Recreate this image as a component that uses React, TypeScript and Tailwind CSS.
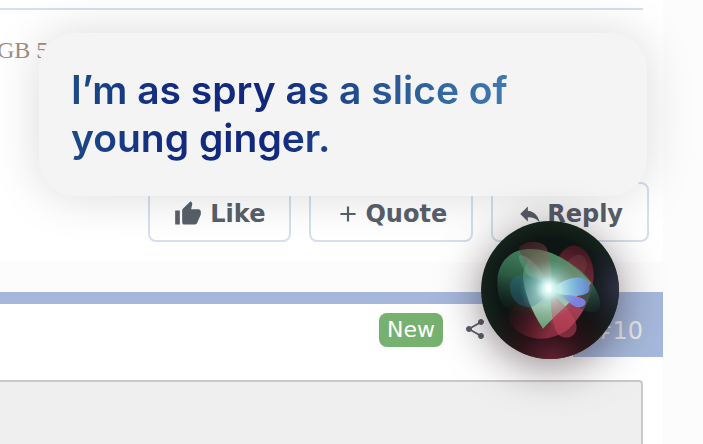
import React from 'react';
import { MdAdd, MdReply, MdShare, MdThumbUp } from 'react-icons/md';

const actions = [
  { label: 'Like', icon: <MdThumbUp size={28} className="mr-1" /> },
  { label: 'Quote', icon: <MdAdd size={26} /> },
  { label: 'Reply', icon: <MdReply size={26} /> },
];

function AssistantOrb() {
  return (
    <svg viewBox="4 4 414 414" className="block h-[138px] w-[138px]" aria-hidden="true">
      <defs>
        <radialGradient id="base" cx="50%" cy="50%" r="50%">
          <stop offset="0%" stopColor="#0a1413" />
          <stop offset="75%" stopColor="#0e1614" />
          <stop offset="100%" stopColor="#15241c" />
        </radialGradient>
        <radialGradient id="rimRed" cx="52%" cy="104%" r="58%">
          <stop offset="0%" stopColor="#6a2338" />
          <stop offset="45%" stopColor="#350f18" stopOpacity="0.7" />
          <stop offset="100%" stopColor="#1a0a0e" stopOpacity="0" />
        </radialGradient>
        <radialGradient id="rimBlue" cx="104%" cy="48%" r="40%">
          <stop offset="0%" stopColor="#35344e" />
          <stop offset="100%" stopColor="#17171f" stopOpacity="0" />
        </radialGradient>
        <linearGradient id="leaf" gradientUnits="userSpaceOnUse" x1="170" y1="90" x2="120" y2="290">
          <stop offset="0%" stopColor="#4f8e68" />
          <stop offset="45%" stopColor="#2f6449" />
          <stop offset="100%" stopColor="#173a2d" stopOpacity="0" />
        </linearGradient>
        <linearGradient id="tail" gradientUnits="userSpaceOnUse" x1="300" y1="160" x2="345" y2="280">
          <stop offset="0%" stopColor="#5b9272" stopOpacity="0.9" />
          <stop offset="50%" stopColor="#2c5a48" stopOpacity="0.8" />
          <stop offset="100%" stopColor="#1b3f35" stopOpacity="0.2" />
        </linearGradient>
        <linearGradient id="wedge" gradientUnits="userSpaceOnUse" x1="190" y1="90" x2="190" y2="327">
          <stop offset="0%" stopColor="#5f9c78" stopOpacity="0.1" />
          <stop offset="40%" stopColor="#86b597" stopOpacity="0.6" />
          <stop offset="70%" stopColor="#a9cdb0" stopOpacity="0.9" />
          <stop offset="100%" stopColor="#63a579" stopOpacity="0.95" />
        </linearGradient>
        <linearGradient id="redRight" gradientUnits="userSpaceOnUse" x1="290" y1="75" x2="210" y2="355">
          <stop offset="0%" stopColor="#3c1620" />
          <stop offset="35%" stopColor="#742a39" />
          <stop offset="65%" stopColor="#a04052" />
          <stop offset="100%" stopColor="#7c2a3a" />
        </linearGradient>
        <linearGradient id="redLeft" gradientUnits="userSpaceOnUse" x1="85" y1="270" x2="215" y2="320">
          <stop offset="0%" stopColor="#3a1219" stopOpacity="0.2" />
          <stop offset="100%" stopColor="#842c3d" />
        </linearGradient>
        <linearGradient id="redTop" gradientUnits="userSpaceOnUse" x1="130" y1="70" x2="215" y2="200">
          <stop offset="0%" stopColor="#57202b" stopOpacity="0.8" />
          <stop offset="60%" stopColor="#a56c66" stopOpacity="0.75" />
          <stop offset="100%" stopColor="#e3c7b4" />
        </linearGradient>
        <linearGradient id="wing" gradientUnits="userSpaceOnUse" x1="225" y1="210" x2="330" y2="200">
          <stop offset="0%" stopColor="#c8f6ff" />
          <stop offset="50%" stopColor="#84bdea" />
          <stop offset="100%" stopColor="#6387d4" />
        </linearGradient>
        <radialGradient id="halo">
          <stop offset="0%" stopColor="#ffffff" />
          <stop offset="22%" stopColor="#f2fffd" stopOpacity="0.95" />
          <stop offset="48%" stopColor="#b9e9e6" stopOpacity="0.5" />
          <stop offset="100%" stopColor="#6cc1b4" stopOpacity="0" />
        </radialGradient>
      </defs>
      <circle cx="211" cy="211" r="207" fill="url(#base)" />
      <circle cx="211" cy="211" r="207" fill="url(#rimRed)" />
      <circle cx="211" cy="211" r="207" fill="url(#rimBlue)" />

      {/* red lobes */}
      <path d="M214 205C130 230 70 270 92 310C110 340 145 357 185 357C198 357 206 356 214 353Z" fill="url(#redLeft)" />
      <path d="M214 205C214 150 235 90 275 78C315 72 343 120 342 170C340 225 312 285 270 325C250 342 232 349 214 353Z" fill="url(#redRight)" />

      {/* green leaf */}
      <path d="M54 205C46 140 82 88 152 88C210 88 262 120 305 155C318 166 328 178 335 190C300 215 250 240 190 300C150 290 105 285 80 265C62 250 55 228 54 205Z" fill="url(#leaf)" opacity="0.9" />
      <path d="M305 155C335 182 350 208 358 232C364 256 362 272 345 277C325 280 300 268 280 250C310 232 335 205 335 190C328 178 318 166 305 155Z" fill="url(#tail)" />
      <path d="M190 327C155 275 132 215 130 166C135 125 160 95 200 95C250 115 300 150 335 190C325 208 300 224 265 252C235 282 210 305 190 327Z" fill="url(#wedge)" />

      {/* upper left and lower petals */}
      <path d="M117 84C138 62 180 60 199 82C215 110 217 160 214 205C175 180 132 135 117 84Z" fill="url(#redTop)" opacity="0.6" />
      <path d="M117 108C140 98 190 150 212 205C165 195 122 150 117 108Z" fill="#8ad0c0" opacity="0.22" />
      <path d="M262 127C300 80 330 120 320 145C308 175 260 195 212 208C222 180 240 150 262 127Z" fill="#a8746a" opacity="0.16" />
      <path d="M214 215C240 245 290 285 291 322C290 350 265 360 243 350C220 335 212 280 214 215Z" fill="#cf465f" opacity="0.5" />

      {/* blue wings */}
      <path d="M212 210C180 175 145 160 115 167C90 178 85 205 98 232C110 258 145 268 165 258C185 245 200 230 212 210Z" fill="#2c6f90" opacity="0.38" />
      <path d="M212 210C245 185 275 172 300 174C325 177 334 197 328 214C318 232 275 230 240 224Z" fill="url(#wing)" opacity="0.92" />
      <path d="M245 226C275 226 308 232 317 243C321 256 308 265 290 262C272 256 260 240 245 226Z" fill="#7d84e4" opacity="0.95" />

      <circle cx="208" cy="208" r="88" fill="url(#halo)" />
      <ellipse cx="207" cy="206" rx="36" ry="46" fill="url(#halo)" />
    </svg>
  );
}

export default function App() {
  return (
    <div className="relative flex min-h-screen flex-col overflow-hidden bg-[#fcfcfc] font-['DejaVu_Sans',sans-serif] text-[#58606b]">
      <article className="mr-10 rounded-b bg-white pb-5">
        <div className="mr-5 h-2.5 border-b-2 border-[#d3e0ee]" />
        <p className="-ml-[3px] pt-6 font-['Liberation_Serif',serif] text-2xl leading-8 text-[#a08d83]">GB 5</p>
        <div className="mr-3.5 mt-[116px] flex justify-end gap-[18px]">
          {actions.map(({ label, icon }) => (
            <button
              key={label}
              type="button"
              className="flex h-[60px] items-center gap-1 rounded-lg border-2 border-[#d5dfed] px-6 pt-1 text-2xl font-bold"
            >
              {icon}
              {label}
            </button>
          ))}
        </div>
      </article>

      <article className="mr-10 mt-[30px] flex flex-1 flex-col border-t-[12px] border-[#a5b8db] bg-white">
        <header className="flex h-[53px] justify-end">
          <div className="flex items-center pb-0.5">
            <span className="rounded-lg bg-[#77b16f] px-2 text-[22px] leading-[34px] text-white">New</span>
            <button type="button" aria-label="Share" className="ml-5 mr-[86px] pb-0.5">
              <MdShare size={24} />
            </button>
          </div>
          <a href="#post-10" className="flex w-[90px] items-center justify-end bg-[#a5b8db] pr-5 text-2xl text-[#e9e9e9]">
            #10
          </a>
        </header>
        <div className="mr-5 mt-[23px] flex-1 rounded-tr border-r-2 border-t-2 border-[#c9c9c9] bg-[#efefef]" />
      </article>

      {/* assistant overlay */}
      <section className="absolute left-[39px] right-14 top-[33px] rounded-[36px] bg-[#f4f4f5] px-8 pb-[34px] pt-[33px] shadow-[0_0_48px_rgba(0,0,0,0.15)]">
        <p className="w-fit bg-[linear-gradient(90deg,#1d4a87_0%,#132c7f_22%,#11277c_45%,#24538f_68%,#4079b0_100%)] bg-clip-text font-['Inter',sans-serif] text-[39px] font-semibold leading-[48px] text-transparent">
          I’m as spry as a slice of
          <br />
          young ginger.
        </p>
      </section>
      <div className="absolute right-[84px] top-[221px] rounded-full shadow-[0_8px_44px_rgba(30,10,15,0.5)]">
        <AssistantOrb />
      </div>
    </div>
  );
}
